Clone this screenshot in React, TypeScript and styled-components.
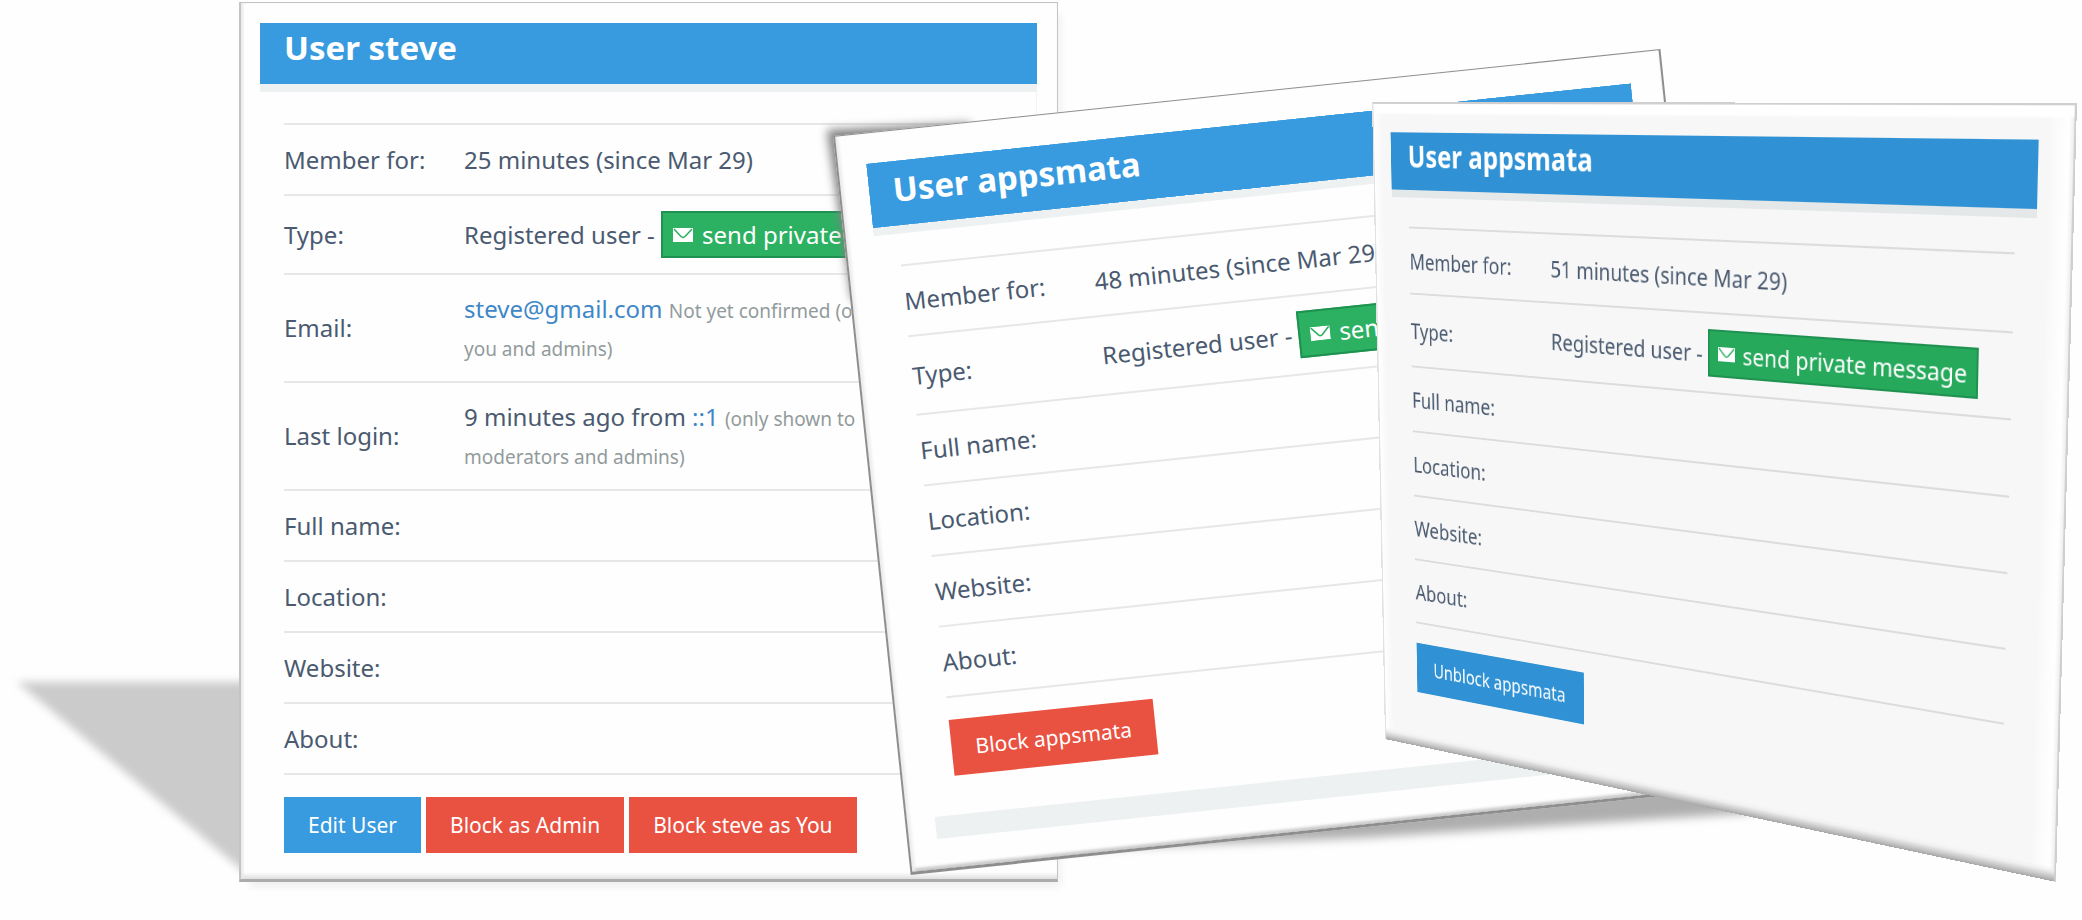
import React from "react";
import styled, { createGlobalStyle, css } from "styled-components";

const GlobalStyle = createGlobalStyle`
  *, *::before, *::after { box-sizing: border-box; }
  body {
    margin: 0;
    background: #fefefe;
    color: #4a5a70;
    font-family: "Noto Sans", "Open Sans", sans-serif;
    font-size: 24px;
    line-height: 38px;
  }
`;

type Point = [number, number];

/* Perspective matrix that pins a w × h box to four corners (TL, TR, BR, BL). */
function pinCorners(w: number, h: number, [p0, p1, p2, p3]: Point[]): string {
  const dx1 = p1[0] - p2[0];
  const dx2 = p3[0] - p2[0];
  const dx3 = p0[0] - p1[0] + p2[0] - p3[0];
  const dy1 = p1[1] - p2[1];
  const dy2 = p3[1] - p2[1];
  const dy3 = p0[1] - p1[1] + p2[1] - p3[1];
  const den = dx1 * dy2 - dx2 * dy1;
  const g = (dx3 * dy2 - dx2 * dy3) / den;
  const k = (dx1 * dy3 - dx3 * dy1) / den;
  const m = [
    (p1[0] - p0[0] + g * p1[0]) / w, (p1[1] - p0[1] + g * p1[1]) / w, 0, g / w,
    (p3[0] - p0[0] + k * p3[0]) / h, (p3[1] - p0[1] + k * p3[1]) / h, 0, k / h,
    0, 0, 1, 0,
    p0[0], p0[1], 0, 1,
  ];
  return `matrix3d(${m.map((n) => n.toFixed(9)).join(",")})`;
}

const Scene = styled.main`
  position: relative;
  min-height: 100vh;
  overflow: hidden;
`;

const ShadowLayer = styled.svg`
  position: absolute;
  left: 0;
  top: 0;
  overflow: visible;
  pointer-events: none;
`;

const Sheet = styled.section`
  position: absolute;
  display: flex;
  flex-direction: column;
  transform-origin: 0 0;
  background: #fefefe;
`;

const FlatSheet = styled(Sheet)`
  left: 239px;
  top: 2px;
  width: 819px;
  padding: 20px 20px 26px 19px;
  border: 2px solid #c4c4c4;
  border-width: 1px 1px 3px 2px;
  border-bottom-color: #acacac;
  box-shadow: inset 3px 0 3px -1px #e8e8e8, inset 0 -6px 5px -3px #dcdcdc,
    6px 8px 8px -4px #eeeeee;
`;

const TiltedSheet = styled(Sheet)`
  left: 833px;
  top: 136px;
  width: 832px;
  padding: 30px 31px 30px 28px;
  border: 2px solid #8e8e8e;
  border-width: 1px 2px 3px 2px;
  transform: rotate(-6deg);
  box-shadow: inset 4px 0 3px -1px #ececec, inset 0 -4px 3px -1px #c8c8c8;
`;

const PerspectiveSheet = styled(Sheet)`
  left: 0;
  top: 0;
  width: 830px;
  height: 708px;
  padding: 30px 34px 0 24px;
  border: solid #cfcfcf;
  border-width: 2px 2px 0 2px;
  border-left-color: #e2e2e2;
  transform: ${pinCorners(830, 708, [[1372, 102], [2077, 103], [2056, 882], [1385, 739]])};
  background:
    linear-gradient(to top, #a6a6a6, #c6c6c6 4px, #f0f0f0 10px, transparent 14px),
    linear-gradient(to bottom, #ffffff 9px, transparent 12px),
    linear-gradient(to left, #eeeeee, #ffffff 5px, #fbfbfb 16px, transparent 24px),
    linear-gradient(to right, #ffffff, transparent 12px),
    #f7f7f7;
`;

const Header = styled.header<{ $tall?: boolean; $dim?: boolean }>`
  display: flex;
  align-items: flex-end;
  height: ${(p) => (p.$tall ? 73 : 69)}px;
  padding: 0 24px 20px;
  border-bottom: 8px solid ${(p) => (p.$dim ? "#e4e8e9" : "#eef1f2")};
  background: ${(p) => (p.$dim ? "#3092d5" : "#399bdf")};
  background-clip: padding-box;
`;

const Title = styled.h2`
  margin: 0;
  color: #ffffff;
  font-size: 33px;
  font-weight: 700;
  line-height: 33px;
`;

const Body = styled.div<{ $edge?: boolean }>`
  padding: 31px 21px 0 24px;
  ${(p) => p.$edge && css`border-right: 1px solid #f2f5f5;`}
`;

const Details = styled.table<{ $labelWidth: number; $dim?: boolean }>`
  width: 100%;
  border-spacing: 0;
  border-top: 2px solid ${(p) => (p.$dim ? "#dcdcdc" : "#e7e7e7")};
  table-layout: fixed;

  th, td {
    height: 71px;
    padding: 15px 0;
    border-bottom: 2px solid ${(p) => (p.$dim ? "#dcdcdc" : "#e7e7e7")};
    text-align: left;
    font-weight: 400;
    vertical-align: middle;
  }
  th { width: ${(p) => p.$labelWidth}px; }
`;

const TextLink = styled.a`
  color: #3f87c7;
  text-decoration: none;
`;

const Note = styled.span`
  color: #929b9c;
  font-size: 19px;
  line-height: 19px;
`;

const MessageButton = styled.button<{ $dim?: boolean }>`
  height: 47px;
  padding: 0 9px 0 10px;
  border: 2px solid #1f9150;
  background: ${(p) => (p.$dim ? "#27a95c" : "#2cb163")};
  color: #ffffff;
  font: inherit;
  line-height: 38px;
  white-space: nowrap;

  svg {
    margin-right: 9px;
    vertical-align: 2px;
  }
`;

const Actions = styled.div`
  display: flex;
  gap: 5px;
  padding-top: 22px;
`;

const tones = { edit: "#399bdf", block: "#e95141", unblock: "#3092d5" };

const ActionButton = styled.button<{ $tone: keyof typeof tones }>`
  height: 56px;
  padding: 0 24px;
  border: 0;
  background: ${(p) => tones[p.$tone]};
  color: #ffffff;
  font-family: inherit;
  font-size: 21px;
  white-space: nowrap;
`;

const FooterBar = styled.div`
  height: 22px;
  margin-top: 39px;
  background: #edf1f2;
`;

function Envelope() {
  return (
    <svg width="20" height="14" viewBox="0 0 20 14" aria-hidden="true">
      <rect width="20" height="14" fill="#ffffff" />
      <path d="M1 1 L8 8.5 Q10 10.3 12 8.5 L19 1" fill="none" stroke="#2cb163" strokeWidth="1.6" />
    </svg>
  );
}

type Row = { label: string; value?: React.ReactNode };

function UserDetails({ rows, labelWidth, dim }: { rows: Row[]; labelWidth: number; dim?: boolean }) {
  return (
    <Details $labelWidth={labelWidth} $dim={dim}>
      <tbody>
        {rows.map((row) => (
          <tr key={row.label}>
            <th scope="row">{row.label}</th>
            <td>{row.value}</td>
          </tr>
        ))}
      </tbody>
    </Details>
  );
}

function UserType({ dim }: { dim?: boolean }) {
  return (
    <>
      Registered user -{" "}
      <MessageButton type="button" $dim={dim}>
        <Envelope />
        send private message
      </MessageButton>
    </>
  );
}

const profileRows: Row[] = [
  { label: "Full name:" },
  { label: "Location:" },
  { label: "Website:" },
  { label: "About:" },
];

const steveRows: Row[] = [
  { label: "Member for:", value: "25 minutes (since Mar 29)" },
  { label: "Type:", value: <UserType /> },
  {
    label: "Email:",
    value: (
      <>
        <TextLink href="mailto:steve@gmail.com">steve@gmail.com</TextLink>{" "}
        <Note>Not yet confirmed (only shown to<br />you and admins)</Note>
      </>
    ),
  },
  {
    label: "Last login:",
    value: (
      <>
        9 minutes ago from <TextLink href="#ip">::1</TextLink>{" "}
        <Note>(only shown to<br />moderators and admins)</Note>
      </>
    ),
  },
  ...profileRows,
];

const blockableRows: Row[] = [
  { label: "Member for:", value: "48 minutes (since Mar 29)" },
  { label: "Type:", value: <UserType /> },
  ...profileRows,
];

const blockedRows: Row[] = [
  { label: "Member for:", value: "51 minutes (since Mar 29)" },
  { label: "Type:", value: <UserType dim /> },
  ...profileRows,
];

export default function App() {
  return (
    <>
      <GlobalStyle />
      <Scene>
        <ShadowLayer width="300" height="900" aria-hidden="true">
          <polygon points="17,682 260,682 260,870 242,870" fill="#cbcbcb" style={{ filter: "blur(4px)" }} />
        </ShadowLayer>
        <FlatSheet>
          <Header><Title>User steve</Title></Header>
          <Body $edge>
            <UserDetails rows={steveRows} labelWidth={180} />
            <Actions>
              <ActionButton type="button" $tone="edit">Edit User</ActionButton>
              <ActionButton type="button" $tone="block">Block as Admin</ActionButton>
              <ActionButton type="button" $tone="block">Block steve as You</ActionButton>
            </Actions>
          </Body>
        </FlatSheet>

        <ShadowLayer width="1800" height="900" aria-hidden="true">
          <g style={{ filter: "blur(5px)" }}>
            <polygon points="827,130 970,123 970,300 852,300" fill="#808080" />
            <polygon points="1060,850 1360,838 1750,813 1750,780 1060,820" fill="#aeaeae" />
          </g>
        </ShadowLayer>
        <TiltedSheet>
          <Header $tall><Title>User appsmata</Title></Header>
          <Body>
            <UserDetails rows={blockableRows} labelWidth={191} />
            <Actions>
              <ActionButton type="button" $tone="block">Block appsmata</ActionButton>
            </Actions>
          </Body>
          <FooterBar />
        </TiltedSheet>

        <PerspectiveSheet>
          <Header $dim><Title>User appsmata</Title></Header>
          <Body>
            <UserDetails rows={blockedRows} labelWidth={193} dim />
            <Actions>
              <ActionButton type="button" $tone="unblock">Unblock appsmata</ActionButton>
            </Actions>
          </Body>
        </PerspectiveSheet>
      </Scene>
    </>
  );
}
